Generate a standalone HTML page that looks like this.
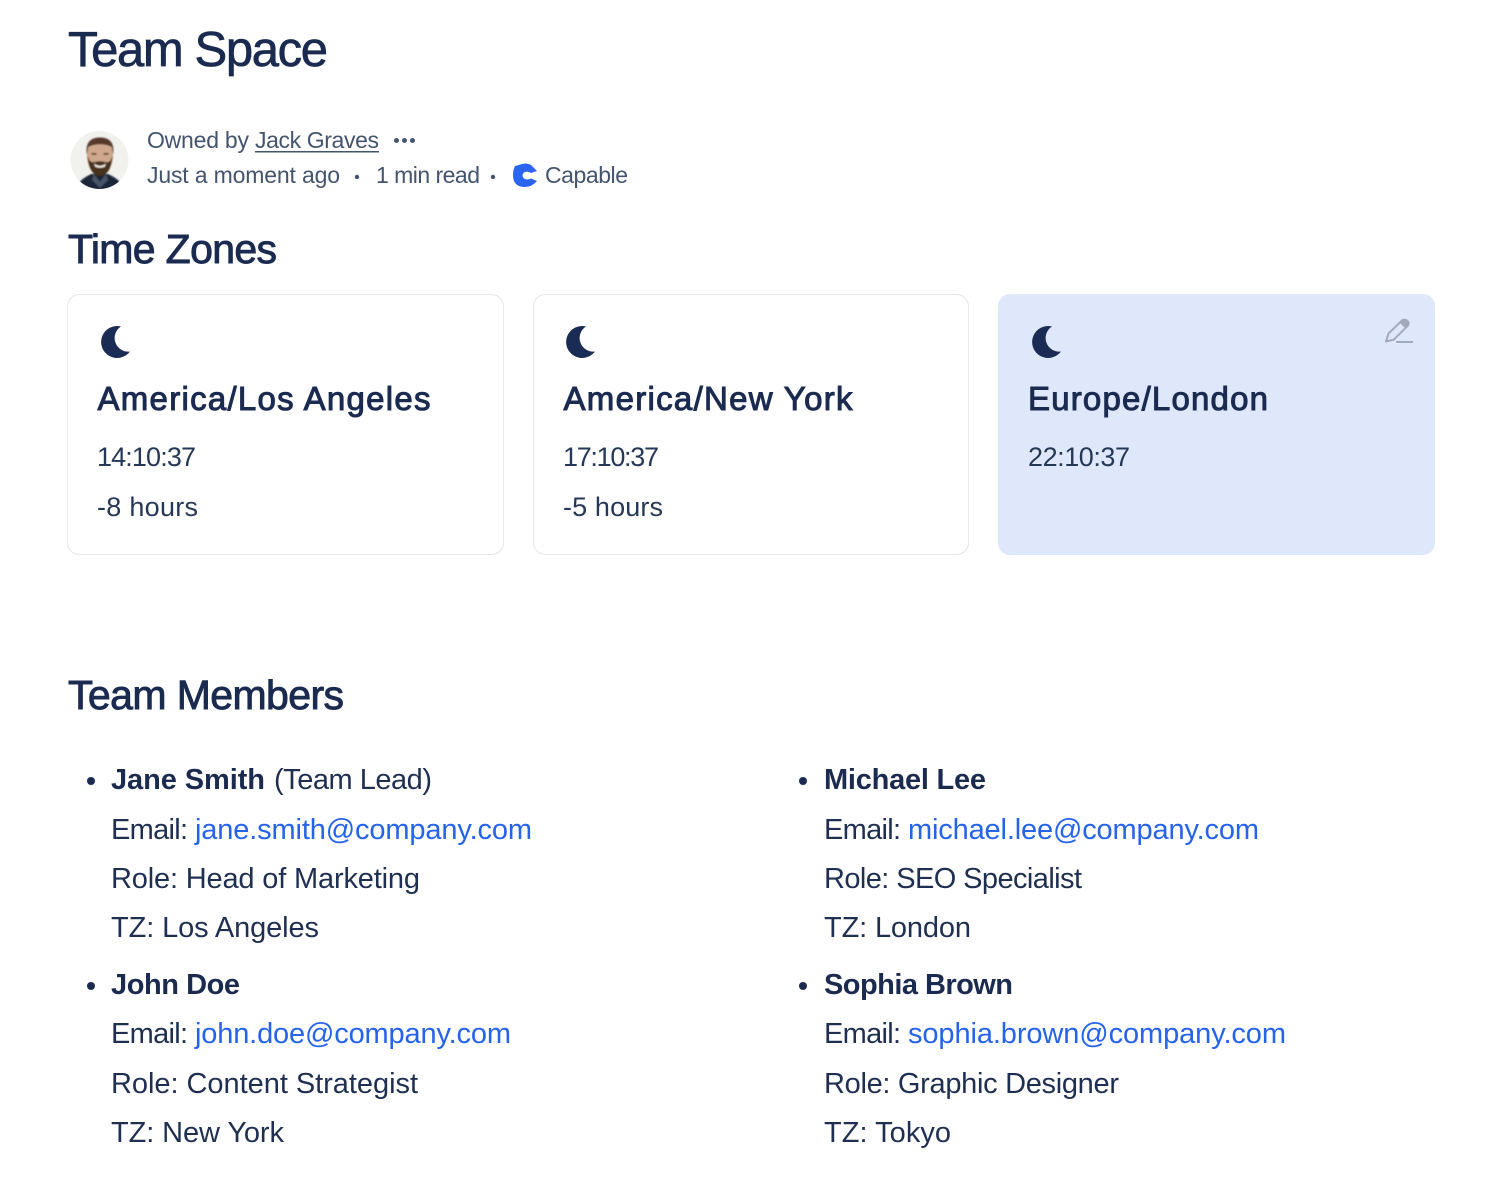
<!DOCTYPE html>
<html lang="en">
<head>
<meta charset="utf-8">
<title>Team Space</title>
<style>
html,body{margin:0;padding:0;background:#fff;width:1496px;height:1182px;overflow:hidden}
svg{display:block}
text{font-family:"Liberation Sans",sans-serif;fill:#1b2b50;white-space:pre}
.t1{font-size:49px;stroke:#1b2b50;stroke-width:.7px}
.h2{font-size:41px;stroke:#1b2b50;stroke-width:.9px}
.ct{font-size:33px;stroke:#1b2b50;stroke-width:1px}
.tm{font-size:27px;fill:#253858}
.b{font-size:29px;fill:#1f2f52}
.bb{font-size:29px;font-weight:700}
.a{font-size:29px;fill:#2563eb}
.m{font-size:23px;fill:#44546f}
</style>
</head>
<body>
<svg xmlns="http://www.w3.org/2000/svg" width="1496" height="1182" viewBox="0 0 1496 1182">
<defs>
<clipPath id="av"><circle cx="99.5" cy="160" r="29"/></clipPath>
<filter id="bl" x="-10%" y="-10%" width="120%" height="120%"><feGaussianBlur stdDeviation="0.7"/></filter>
<path id="moon" d="M119.500 326.500A16 16 0 1 0 128.500 351.500A13.600 13.600 0 0 1 119.500 326.500Z" fill="#1b2c54"/>
</defs>

<text class="t1" x="68" y="66" textLength="260" lengthAdjust="spacing">Team Space</text>

<!-- avatar -->
<g clip-path="url(#av)">
<rect x="70" y="130" width="60" height="60" fill="#f1f1ee"/>
<g filter="url(#bl)">
<path d="M76 190C78 180 86 177 91 174L108 174C114 177 121 180 124 190Z" fill="#1a2538"/>
<path d="M94 174L100 182L106 174L108 180L100 188L92 180Z" fill="#46546a"/>
<ellipse cx="100" cy="156" rx="13" ry="17" fill="#cfa78c"/>
<path d="M87 155C85 142 91 137.500 100 137.500C109 137.500 115 142 113 155L111.500 147C106 143.500 94 143.500 88.500 147Z" fill="#54392a"/>
<path d="M87.500 155C88 168 93 176 100 176C107 176 112 168 112.500 155C111 161 109 163 105 162C102 161 98 161 95 162C91 163 89 161 87.500 155Z" fill="#46301f"/>
<path d="M94 163.500Q100 168 106 163.500L105 166.500Q100 169 95 166.500Z" fill="#f4efe8"/>
<rect x="91.500" y="153" width="5" height="1.800" fill="#5b4030"/>
<rect x="103.500" y="153" width="5" height="1.800" fill="#5b4030"/>
</g>
</g>

<!-- meta -->
<text class="m" x="147" y="148" textLength="102" lengthAdjust="spacing">Owned by</text>
<text class="m" x="255" y="148" textLength="124" lengthAdjust="spacing">Jack Graves</text>
<rect x="255" y="151" width="124" height="1.500" fill="#44546f"/>
<circle cx="396.500" cy="140.500" r="2.500" fill="#44546f"/>
<circle cx="404.500" cy="140.500" r="2.500" fill="#44546f"/>
<circle cx="412.500" cy="140.500" r="2.500" fill="#44546f"/>
<text class="m" x="147" y="183" textLength="193" lengthAdjust="spacing">Just a moment ago</text>
<circle cx="357" cy="177" r="2.200" fill="#44546f"/>
<text class="m" x="376" y="183" textLength="104" lengthAdjust="spacing">1 min read</text>
<circle cx="493" cy="177" r="2.200" fill="#44546f"/>
<path d="M515 166L519 165Q526 162 531 165L537 171L531 173Q527 170.500 524 172.500Q521 175.500 524 178.500Q527 180.500 531 178.500L537 181Q532 187 525 187Q513 187 513 175Q513 170 515 166Z" fill="#2b64f0"/>
<text class="m" x="545" y="183" textLength="83" lengthAdjust="spacing">Capable</text>

<text class="h2" x="68" y="263" textLength="209" lengthAdjust="spacing">Time Zones</text>

<!-- cards -->
<rect x="67.500" y="294.500" width="436" height="260" rx="12" fill="#fff" stroke="#e4e6ea"/>
<rect x="533.500" y="294.500" width="435" height="260" rx="12" fill="#fff" stroke="#e4e6ea"/>
<rect x="998" y="294" width="437" height="261" rx="12" fill="#dfe8fa"/>

<use href="#moon" x="1.500"/>
<use href="#moon" x="466.500"/>
<use href="#moon" x="932.500"/>

<g transform="translate(-1 0)">
<path d="M1387 341.500L1389.500 333.500L1403 320.500C1404.500 319 1407 319.500 1408.500 321C1410 322.500 1410 324.500 1408.500 326L1395 339.500Z" fill="none" stroke="#a3abbb" stroke-width="2" stroke-linejoin="round"/>
<path d="M1402.500 320.500C1404.500 318.500 1407 318.500 1408.700 320.500C1410.500 322.500 1410.500 324.500 1408.500 326.500L1406.500 328.500L1400.500 322.500Z" fill="#a3abbb"/>
<rect x="1397" y="341" width="17" height="2" fill="#a3abbb"/>
</g>

<text class="ct" x="97.500" y="410" textLength="333" lengthAdjust="spacing">America/Los Angeles</text>
<text class="tm" x="97" y="466" textLength="99" lengthAdjust="spacing">14:10:37</text>
<text class="tm" x="97" y="516" textLength="101" lengthAdjust="spacing">-8 hours</text>

<text class="ct" x="563.500" y="410" textLength="289" lengthAdjust="spacing">America/New York</text>
<text class="tm" x="563" y="466" textLength="96" lengthAdjust="spacing">17:10:37</text>
<text class="tm" x="563" y="516" textLength="100" lengthAdjust="spacing">-5 hours</text>

<text class="ct" x="1028" y="410" textLength="240" lengthAdjust="spacing">Europe/London</text>
<text class="tm" x="1028" y="466" textLength="102" lengthAdjust="spacing">22:10:37</text>

<text class="h2" x="68" y="709" textLength="276" lengthAdjust="spacing">Team Members</text>

<!-- left list -->
<circle cx="91" cy="781" r="4" fill="#1b2b50"/>
<text class="bb" x="111" y="789" textLength="154" lengthAdjust="spacing">Jane Smith</text>
<text class="b" x="274" y="789" textLength="158" lengthAdjust="spacing">(Team Lead)</text>
<text class="b" x="111" y="839" textLength="77" lengthAdjust="spacing">Email:</text>
<text class="a" x="195" y="839" textLength="337" lengthAdjust="spacing">jane.smith@company.com</text>
<text class="b" x="111" y="888" textLength="309" lengthAdjust="spacing">Role: Head of Marketing</text>
<text class="b" x="111" y="937" textLength="208" lengthAdjust="spacing">TZ: Los Angeles</text>

<circle cx="91" cy="986" r="4" fill="#1b2b50"/>
<text class="bb" x="111" y="994" textLength="129" lengthAdjust="spacing">John Doe</text>
<text class="b" x="111" y="1043" textLength="77" lengthAdjust="spacing">Email:</text>
<text class="a" x="195" y="1043" textLength="316" lengthAdjust="spacing">john.doe@company.com</text>
<text class="b" x="111" y="1093" textLength="307" lengthAdjust="spacing">Role: Content Strategist</text>
<text class="b" x="111" y="1142" textLength="173" lengthAdjust="spacing">TZ: New York</text>

<!-- right list -->
<circle cx="803" cy="781" r="4" fill="#1b2b50"/>
<text class="bb" x="824" y="789" textLength="162" lengthAdjust="spacing">Michael Lee</text>
<text class="b" x="824" y="839" textLength="77" lengthAdjust="spacing">Email:</text>
<text class="a" x="908" y="839" textLength="351" lengthAdjust="spacing">michael.lee@company.com</text>
<text class="b" x="824" y="888" textLength="258" lengthAdjust="spacing">Role: SEO Specialist</text>
<text class="b" x="824" y="937" textLength="147" lengthAdjust="spacing">TZ: London</text>

<circle cx="803" cy="986" r="4" fill="#1b2b50"/>
<text class="bb" x="824" y="994" textLength="189" lengthAdjust="spacing">Sophia Brown</text>
<text class="b" x="824" y="1043" textLength="77" lengthAdjust="spacing">Email:</text>
<text class="a" x="908" y="1043" textLength="378" lengthAdjust="spacing">sophia.brown@company.com</text>
<text class="b" x="824" y="1093" textLength="295" lengthAdjust="spacing">Role: Graphic Designer</text>
<text class="b" x="824" y="1142" textLength="127" lengthAdjust="spacing">TZ: Tokyo</text>
</svg>
</body>
</html>
